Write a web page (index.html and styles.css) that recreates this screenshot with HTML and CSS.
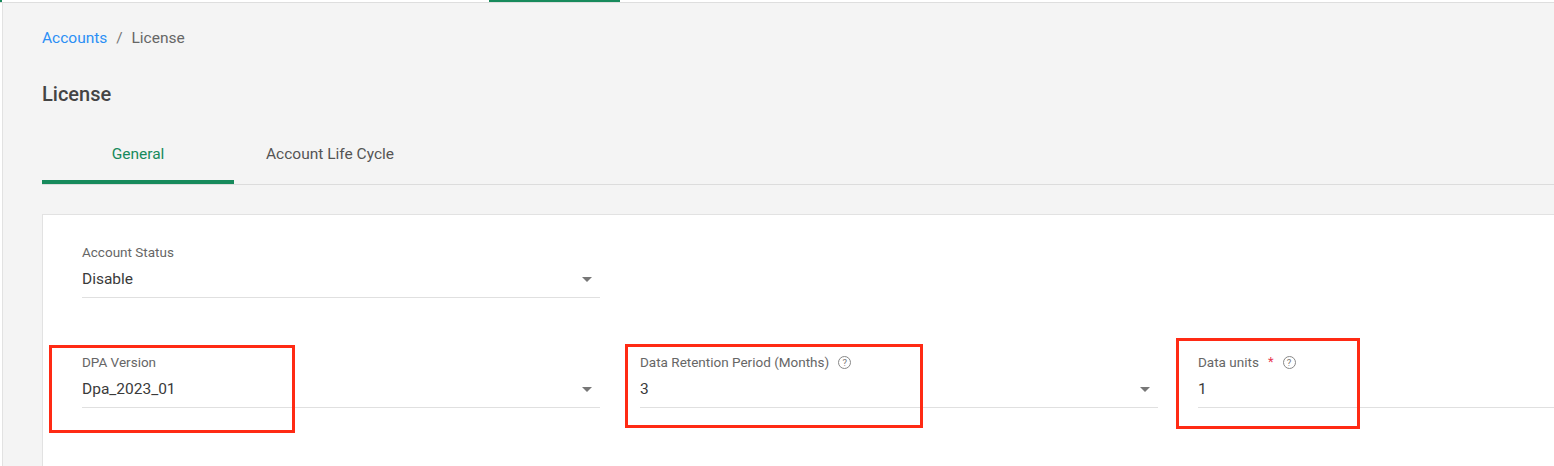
FILE: index.html
```html
<!DOCTYPE html>
<html lang="en">
<head>
    <meta charset="UTF-8">
    <title>License</title>
    <link rel="stylesheet" href="styles.css">
</head>
<body>
    <div class="topbar">
        <span class="topbar-mark"></span>
        <span class="topbar-active"></span>
    </div>
    <div class="layout">
        <aside class="sidebar"></aside>
        <main class="content">
            <nav class="breadcrumb">
                <a href="#" class="crumb-link">Accounts</a>
                <span class="crumb-sep">/</span>
                <span class="crumb-current">License</span>
            </nav>

            <h1 class="page-title">License</h1>

            <div class="tabs">
                <div class="tab active">General</div>
                <div class="tab">Account Life Cycle</div>
            </div>

            <div class="card">
                <div class="form-grid">
                    <div class="field">
                        <div class="field-label">Account Status</div>
                        <div class="field-control">
                            <span class="field-value">Disable</span>
                            <span class="caret"></span>
                        </div>
                    </div>
                    <div class="field"></div>
                    <div class="field"></div>

                    <div class="field">
                        <div class="field-label">DPA Version</div>
                        <div class="field-control">
                            <span class="field-value">Dpa_2023_01</span>
                            <span class="caret"></span>
                        </div>
                    </div>
                    <div class="field">
                        <div class="field-label">Data Retention Period (Months) <span class="help">?</span></div>
                        <div class="field-control">
                            <span class="field-value">3</span>
                            <span class="caret"></span>
                        </div>
                    </div>
                    <div class="field">
                        <div class="field-label">Data units <span class="required">*</span> <span class="help">?</span></div>
                        <div class="field-control">
                            <span class="field-value">1</span>
                        </div>
                    </div>
                </div>
            </div>
        </main>
    </div>

    <!-- annotation boxes drawn over the screenshot -->
    <div class="mark mark-dpa"></div>
    <div class="mark mark-retention"></div>
    <div class="mark mark-units"></div>
</body>
</html>
```

FILE: styles.css
```css
body {
    margin: 0;
    padding: 0;
    font-family: 'Roboto', 'Liberation Sans', sans-serif;
    background-color: #f4f4f4;
    color: #333;
    width: 1554px;
    height: 466px;
    overflow: hidden;
    position: relative;
}

.topbar {
    height: 2px;
    background-color: #fff;
    border-bottom: 1px solid #dedede;
    display: flex;
}

.topbar-mark {
    width: 2px;
    background-color: #178a5c;
}

.topbar-active {
    width: 131px;
    margin-left: 487px;
    background-color: #178a5c;
}

.layout {
    display: flex;
}

.sidebar {
    width: 2px;
    background-color: #fff;
    border-right: 1px solid #e2e2e2;
    min-height: 470px;
}

.content {
    flex: 1;
    padding: 25px 0 0 39px;
    min-width: 0;
    overflow: hidden;
}

.breadcrumb {
    font-size: 15.5px;
    line-height: 20px;
    color: #666;
}

.crumb-link {
    color: #2b8ff5;
    text-decoration: none;
}

.crumb-sep {
    margin: 0 5px;
    color: #777;
}

.page-title {
    margin: 34px 0 0;
    font-size: 20px;
    line-height: 24px;
    font-weight: 500;
    color: #444;
}

.tabs {
    display: flex;
    margin-top: 22px;
    border-bottom: 1px solid #dcdcdc;
}

.tab {
    width: 192px;
    padding: 16px 0 16px;
    font-size: 15.5px;
    line-height: 20px;
    text-align: center;
    color: #555;
    border-bottom: 4px solid transparent;
}

.tab.active {
    color: #178a5c;
    border-bottom-color: #178a5c;
}

.card {
    margin-top: 29px;
    background-color: #fff;
    border: 1px solid #e2e2e2;
    padding: 29px 0 60px 39px;
    width: 1700px;
}

.form-grid {
    display: grid;
    grid-template-columns: 518px 518px 518px;
    column-gap: 40px;
    row-gap: 56px;
}

.field-label {
    font-size: 13.5px;
    line-height: 16px;
    color: #666;
    display: flex;
    align-items: center;
}

.field-control {
    margin-top: 9px;
    padding-bottom: 8px;
    border-bottom: 1px solid #e0e0e0;
    display: flex;
    align-items: center;
    justify-content: space-between;
}

.field-value {
    font-size: 15.5px;
    line-height: 20px;
    color: #3a3a3a;
}

.caret {
    width: 0;
    height: 0;
    margin-right: 8px;
    border-left: 5px solid transparent;
    border-right: 5px solid transparent;
    border-top: 5px solid #777;
}

.required {
    color: #e8384f;
    margin-left: 9px;
    font-size: 13px;
}

.help {
    display: inline-flex;
    align-items: center;
    justify-content: center;
    width: 11px;
    height: 11px;
    margin-left: 9px;
    border: 1px solid #888;
    border-radius: 50%;
    font-size: 9.5px;
    line-height: 11px;
    color: #777;
}

.mark {
    position: absolute;
    border: 3px solid #ff2a14;
    box-sizing: border-box;
}

.mark-dpa {
    left: 49px;
    top: 345px;
    width: 246px;
    height: 88px;
}

.mark-retention {
    left: 625px;
    top: 344px;
    width: 298px;
    height: 84px;
}

.mark-units {
    left: 1176px;
    top: 338px;
    width: 184px;
    height: 91px;
}
```
